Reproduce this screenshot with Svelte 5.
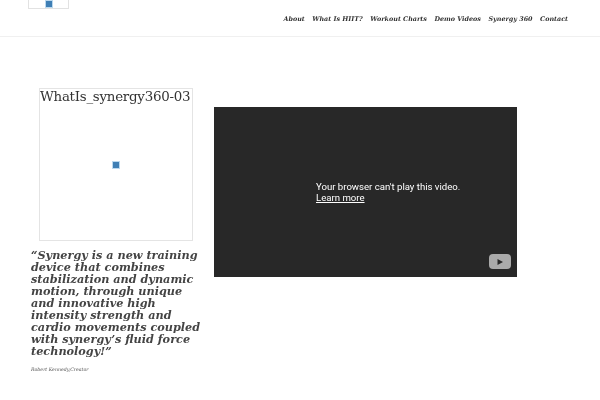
<script>
  const nav = ['About', 'What Is HIIT?', 'Workout Charts', 'Demo Videos', 'Synergy 360', 'Contact'];
</script>

<div class="page">
  <header>
    <div class="logo"><span class="broken"></span></div>
    <nav>
      {#each nav as item}<a href="#top">{item}</a>{/each}
    </nav>
  </header>
  <main>
    <section class="left">
      <div class="figure">
        <span class="alt">WhatIs_synergy360-03</span>
        <span class="broken mid"></span>
      </div>
      <blockquote>“Synergy is a new training device that combines stabilization and dynamic motion, through unique and innovative high intensity strength and cardio movements coupled with synergy’s fluid force technology!”</blockquote>
      <p class="credit">Robert Kennedy,Creator</p>
    </section>
    <section class="video">
      <div class="msg">
        <div>Your browser can't play this video.</div>
        <a href="#top">Learn more</a>
      </div>
      <div class="yt">
        <svg width="8" height="8" viewBox="0 0 8 8"><path d="M1.5 1 L7 4 L1.5 7 Z" fill="#2a2a2a" /></svg>
      </div>
    </section>
  </main>
</div>

<style>
  :global(body) { margin: 0; background: #fff; }
  .page { width: 600px; height: 400px; overflow: hidden; font-family: "DejaVu Serif", serif; color: #333; filter: blur(0.35px); }
  header { height: 36px; border-bottom: 1px solid #f0f0f0; display: flex; justify-content: space-between; align-items: flex-start; padding: 0 32px 0 28px; }
  .logo { width: 39px; height: 8px; border: 1px solid #e2e2e2; border-top: 0; display: flex; justify-content: center; align-items: center; }
  .broken { display: block; width: 6px; height: 6px; background: #3f7fb5; outline: 1px solid #bcd9ef; }
  nav { display: flex; gap: 7.5px; padding-top: 14px; }
  nav a { font-size: 6.4px; line-height: 10px; font-weight: bold; font-style: italic; color: #333; text-decoration: none; }
  main { display: flex; align-items: flex-start; padding: 51px 0 0 31px; gap: 13px; }
  .left { width: 170px; }
  .figure { position: relative; box-sizing: border-box; width: 154px; height: 153px; margin-left: 8px; border: 1px solid #e4e4e4; }
  .alt { display: block; font-size: 13.4px; letter-spacing: -0.25px; line-height: 15px; white-space: nowrap; color: #333; }
  .mid { position: absolute; left: 73px; top: 73px; }
  blockquote { margin: 8px 0 0; font-size: 11.25px; line-height: 12px; font-weight: bold; font-style: italic; color: #444; }
  .credit { margin: 9px 0 0; font-size: 4.7px; line-height: 7px; font-style: italic; color: #555; }
  .video { position: relative; width: 303px; height: 170px; margin-top: 19px; background: #282828; }
  .msg { position: absolute; left: 102px; top: 74px; font-family: Roboto, sans-serif; font-size: 9.6px; line-height: 11px; color: #fff; }
  .msg a { color: #fff; }
  .yt { position: absolute; right: 6px; bottom: 8px; width: 22px; height: 15px; background: #aaa; border-radius: 4px; display: flex; justify-content: center; align-items: center; }
</style>
